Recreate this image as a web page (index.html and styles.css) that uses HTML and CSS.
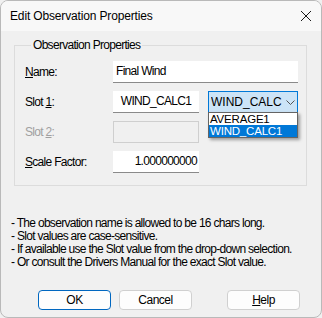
FILE: index.html
```html
<!DOCTYPE html>
<html lang="en">
<head>
    <meta charset="UTF-8">
    <title>Edit Observation Properties</title>
    <link rel="stylesheet" href="styles.css">
</head>
<body>
    <div class="window">
        <div class="titlebar">
            <span class="title">Edit Observation Properties</span>
            <svg class="close" width="12" height="12" viewBox="0 0 12 12">
                <path d="M1 1 L11 11 M11 1 L1 11" stroke="#1a1a1a" stroke-width="1" fill="none"/>
            </svg>
        </div>

        <div class="dialog">
            <fieldset class="group">
                <legend>Observation Properties</legend>

                <div class="row">
                    <span class="label"><u>N</u>ame:</span>
                    <div class="edit wide">Final Wind</div>
                </div>

                <div class="row">
                    <span class="label">Slot <u>1</u>:</span>
                    <div class="edit centered">WIND_CALC1</div>
                    <div class="combo">
                        <span class="comboText">WIND_CALC1</span>
                        <svg class="chevron" width="9" height="5" viewBox="0 0 9 5">
                            <path d="M0.5 0.5 L4.5 4.5 L8.5 0.5" stroke="#555" stroke-width="1" fill="none"/>
                        </svg>
                        <div class="dropList">
                            <div class="item">AVERAGE1</div>
                            <div class="item selected">WIND_CALC1</div>
                        </div>
                    </div>
                </div>

                <div class="row">
                    <span class="label disabled">Slot <u>2</u>:</span>
                    <div class="edit off"></div>
                </div>

                <div class="row">
                    <span class="label"><u>S</u>cale Factor:</span>
                    <div class="edit righted">1.000000000</div>
                </div>
            </fieldset>

            <div class="notes">
                <p>- The observation name is allowed to be 16 chars long.</p>
                <p>- Slot values are case-sensitive.</p>
                <p>- If available use the Slot value from the drop-down selection.</p>
                <p>- Or consult the Drivers Manual for the exact Slot value.</p>
            </div>

            <div class="buttons">
                <button class="btn default">OK</button>
                <button class="btn">Cancel</button>
                <button class="btn help"><u>H</u>elp</button>
            </div>
        </div>
    </div>
</body>
</html>
```

FILE: styles.css
```css
body{
    margin: 0;
    background-color: #f0f0f0;
    font-family: "Liberation Sans", Arial, sans-serif;
}

.window{
    width: 322px;
    height: 318px;
    box-sizing: border-box;
    border: 1px solid #b9b9b9;
    border-radius: 8px;
    overflow: hidden;
    background-color: #f0f0f0;
}

.titlebar{
    height: 30px;
    background-color: #f8f8f8;
    display: flex;
    align-items: center;
    justify-content: space-between;
    padding: 0 9px 0 9px;
}

.title{
    font-size: 12px;
    letter-spacing: -0.15px;
    color: #000;
}

.close{
    display: block;
}

.dialog{
    font-size: 12px;
    letter-spacing: -0.7px;
    color: #000;
}

.group{
    margin: 7px 14px 0 13px;
    padding: 9px 8px 12px 10px;
    border: 1px solid #dcdcdc;
    display: flex;
    flex-direction: column;
    gap: 8px;
}

.group legend{
    line-height: 14px;
    padding: 0 2px;
    margin-left: 6px;
}

.row{
    display: flex;
    align-items: center;
    height: 22px;
}

.label{
    width: 88px;
    flex: none;
}

.label.disabled{
    color: #a0a0a0;
}

.edit{
    width: 86px;
    height: 22px;
    box-sizing: border-box;
    background-color: #fff;
    border-bottom: 1px solid #8a8a8a;
    line-height: 21px;
    padding: 0 3px;
    white-space: nowrap;
}

.edit.wide{
    width: 185px;
}

.edit.centered{
    text-align: center;
}

.edit.righted{
    text-align: right;
    padding-right: 2px;
}

.edit.off{
    background-color: #f0f0f0;
    border: 1px solid #cfcfcf;
}

.combo{
    position: relative;
    margin-left: 9px;
    width: 90px;
    height: 22px;
    box-sizing: border-box;
    border: 1px solid #0078d7;
    background-color: #cce4f7;
    display: flex;
    align-items: center;
    padding-left: 2px;
}

.comboText{
    width: 71px;
    overflow: hidden;
    white-space: nowrap;
    letter-spacing: 0;
}

.chevron{
    margin-left: 4px;
}

.dropList{
    position: absolute;
    left: -1px;
    top: 20px;
    width: 90px;
    box-sizing: border-box;
    border: 1px solid #646464;
    background-color: #fff;
    box-shadow: 2px 2px 3px rgba(0, 0, 0, 0.35);
    font-size: 11.5px;
    letter-spacing: -0.2px;
}

.item{
    height: 12px;
    line-height: 12px;
    padding-left: 1px;
    overflow: hidden;
}

.item.selected{
    background-color: #0078d7;
    color: #fff;
}

.notes{
    margin: 31px 0 0 10px;
}

.notes p{
    margin: 0;
    line-height: 13px;
}

.buttons{
    display: flex;
    margin: 21px 0 0 37px;
}

.btn{
    width: 73px;
    height: 20px;
    margin-right: 8px;
    border: 1px solid #d0d0d0;
    border-radius: 4px;
    background-color: #fdfdfd;
    font-family: "Liberation Sans", Arial, sans-serif;
    font-size: 12px;
    letter-spacing: -0.5px;
    color: #000;
    padding: 0;
}

.btn.default{
    border-color: #0067c0;
}

.btn.help{
    margin-left: 27px;
}
```
